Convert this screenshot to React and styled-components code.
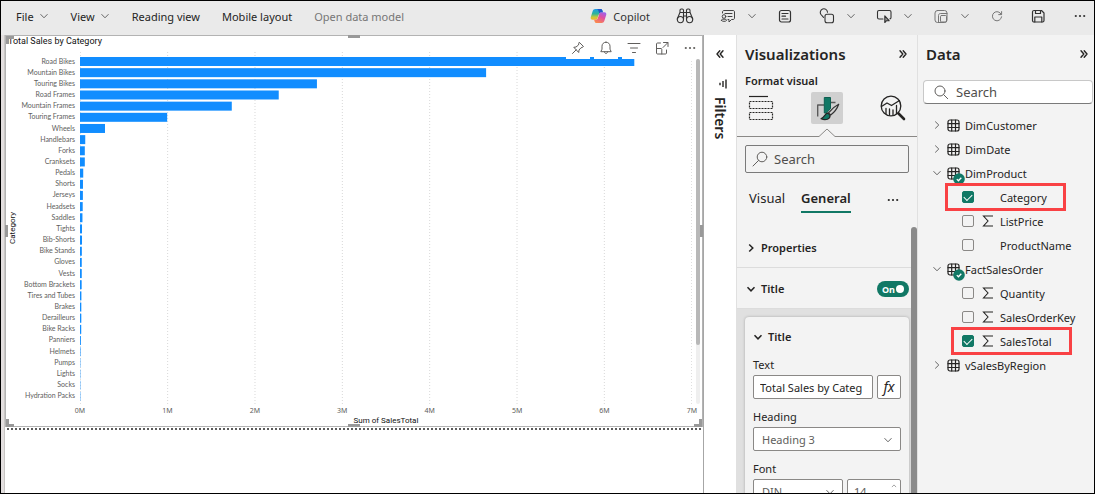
import React from "react";
import styled, { createGlobalStyle, css } from "styled-components";

const GlobalStyle = createGlobalStyle`
  * { box-sizing: border-box; }
  body {
    margin: 0;
    font-family: "Segoe UI", "Noto Sans", sans-serif;
    font-size: 11px;
    color: #252423;
  }
  button, input, select { font: inherit; color: inherit; }
  button { border: 0; padding: 0; background: none; cursor: pointer; }
  svg { display: block; flex: none; }
`;

/* ---------- shell ---------- */

const Frame = styled.div`
  display: flex;
  flex-direction: column;
  height: 100vh;
  border: 1px solid #000;
  overflow: hidden;
  background: #fff;
`;

const Toolbar = styled.header`
  display: flex;
  flex: none;
  align-items: center;
  height: 34px;
  padding: 0 6px 4px 15px;
  background: #eaeaea;
`;

const Menu = styled.nav`
  display: flex;
  align-items: center;
  gap: 22px;
  white-space: nowrap;
`;

const MenuButton = styled.button`
  display: flex;
  align-items: center;
  gap: 5px;
  color: ${(p) => (p.$muted ? "#767676" : "#252423")};
`;

const Tools = styled.div`
  display: flex;
  align-items: center;
  gap: 20px;
  margin-left: auto;
`;

const ToolButton = styled.button`
  display: flex;
  align-items: center;
  gap: 11px;
  margin-right: ${(p) => (p.$single ? "6px" : "0")};
  color: ${(p) => (p.$muted ? "#777" : "#333")};
`;

const CopilotButton = styled(ToolButton)`
  gap: 6px;
`;

const Workspace = styled.div`
  display: flex;
  flex: 1;
  min-height: 0;
`;

const Rail = styled.div`
  flex: none;
  width: 4px;
  background: #e3dfdf;
  border-right: 1px solid #c8c6c4;
`;

const Canvas = styled.main`
  flex: 1;
  min-width: 0;
  border-right: 1px solid #a6a6a6;
`;

/* ---------- chart visual ---------- */

const Visual = styled.section`
  position: relative;
  display: flex;
  flex-direction: column;
  height: 392px;
  border: 1px solid #b3b3b3;
  padding-right: 2px;
`;

const ChartTitle = styled.h2`
  flex: none;
  margin: 0;
  padding-left: 2px;
  height: 16px;
  font: 400 9px/11px Roboto, sans-serif;
  color: #111;
`;

const ChartBody = styled.div`
  display: grid;
  grid-template-columns: 14px 56px 1fr 4px;
  height: 352px;
`;

const AxisName = styled.span`
  font: 400 8px/11px Roboto, sans-serif;
  color: #111;
  text-align: center;
`;

const VerticalAxisName = styled(AxisName)`
  line-height: 14px;
  writing-mode: vertical-rl;
  transform: rotate(180deg);
`;

const CategoryLabels = styled.ul`
  display: flex;
  flex-direction: column;
  margin: 0;
  padding: 3px 1px 3px 0;
  list-style: none;
  font-family: Lato, sans-serif;
  font-size: 7px;
  line-height: 10px;
  white-space: nowrap;
  color: #605e5c;

  li {
    display: flex;
    flex: 1;
    align-items: center;
    justify-content: flex-end;
    min-height: 0;
  }
`;

const Plot = styled.div`
  margin: 0 4px;
  min-width: 0;
`;

const ScrollTrack = styled.div`
  margin-top: 7px;
  border-radius: 2px;
  background: #efefef;
`;

const ScrollThumb = styled.div`
  height: 83%;
  border-radius: 2px;
  background: #b8b8b8;
`;

const Ticks = styled.div`
  display: flex;
  flex: none;
  justify-content: space-between;
  height: 11px;
  padding: 0 8px 0 74px;
  font-size: 7px;
  line-height: 14px;
  color: #605e5c;

  span {
    display: flex;
    justify-content: center;
    width: 0;
  }
`;

const HorizontalAxisName = styled(AxisName)`
  padding-left: 66px;
`;

const VisualHeader = styled.div`
  position: absolute;
  top: 0;
  right: 0;
  display: flex;
  gap: 4px;
`;

const HeaderButton = styled.button`
  display: flex;
  align-items: center;
  justify-content: center;
  width: 24px;
  height: 23px;
  background: #fff;
  color: #605e5c;
`;

const handlePlaces = {
  topLeft: css`top: 0; left: 0; border-width: 3px 0 0 3px;`,
  bottomLeft: css`bottom: -1px; left: 0; border-width: 0 0 3px 3px;`,
  bottomRight: css`bottom: -1px; right: 0; border-width: 0 3px 3px 0;`,
  top: css`top: -1px; left: calc(50% - 6px); width: 12px; border-width: 3px 0 0;`,
  bottom: css`bottom: -1px; left: calc(50% - 6px); width: 12px; border-width: 0 0 3px;`,
  left: css`left: -1px; top: calc(50% - 6px); height: 12px; border-width: 0 0 0 3px;`,
  right: css`right: -1px; top: calc(50% - 6px); height: 12px; border-width: 0 3px 0 0;`,
};

const Handle = styled.span`
  position: absolute;
  width: 8px;
  height: 8px;
  border: 0 solid #999;
  ${(p) => handlePlaces[p.$place]}
`;

const PageEdge = styled.div`
  height: 2px;
  margin-top: 1px;
  background: repeating-linear-gradient(to right, #fff 0 2px, #5a5a5a 2px 4px);
`;

/* ---------- side panes ---------- */

const FiltersPane = styled.aside`
  display: flex;
  flex: none;
  flex-direction: column;
  align-items: center;
  width: 32px;
  padding-top: 14px;
`;

const FiltersTitle = styled.h2`
  margin: 8px 0 0;
  font-size: 14px;
  font-weight: 600;
  line-height: 20px;
  writing-mode: vertical-rl;
`;

const FilterGlyph = styled.div`
  margin: 20px 0 0 4px;
`;

const Pane = styled.aside`
  display: flex;
  flex: none;
  flex-direction: column;
  width: ${(p) => p.$width};
  background: #f3f3f3;
  border-left: 1px solid #e0e0e0;
`;

const PaneHeader = styled.div`
  display: flex;
  flex: none;
  align-items: center;
  justify-content: space-between;
  height: 38px;
  padding: 0 ${(p) => (p.$tight ? "6px" : "10px")} 0 8px;
`;

const PaneTitle = styled.h2`
  margin: 0;
  font-size: 15px;
  font-weight: 600;
  line-height: 20px;
`;

const IconButton = styled.button`
  display: flex;
  color: #252423;
`;

const Subtitle = styled.h3`
  margin: 0;
  padding: 0 8px;
  font-size: 11px;
  font-weight: 600;
  line-height: 16px;
`;

const ModeBar = styled.div`
  display: flex;
  flex: none;
  justify-content: space-between;
  padding: 3px 8px 0;
`;

const ModeButton = styled.button`
  display: flex;
  align-items: center;
  justify-content: center;
  width: 32px;
  height: 32px;
  border-radius: 2px;
  background: ${(p) => (p.$active ? "#d0d0d0" : "transparent")};
`;

const Pointer = styled.div`
  display: flex;
  align-items: flex-end;
  height: 13px;

  &::before,
  &::after {
    content: "";
    flex: 1;
    height: 1px;
    background: #8a8886;
  }
`;

const SearchBox = styled.label`
  display: flex;
  flex: none;
  align-items: center;
  gap: ${(p) => (p.$wide ? "7px" : "6px")};
  height: ${(p) => (p.$wide ? "24px" : "28px")};
  margin: ${(p) => (p.$wide ? "7px 1px 9px 5px" : "8px 8px 0")};
  padding: 0 ${(p) => (p.$wide ? "9px" : "6px")};
  border: 1px solid ${(p) => (p.$wide ? "#c8c8c8" : "#7a7a7a")};
  border-bottom-color: #7a7a7a;
  border-radius: ${(p) => (p.$wide ? "4px" : "2px")};
  background: ${(p) => (p.$wide ? "#fff" : "transparent")};
  color: #605e5c;
  font-size: 13px;

  input {
    flex: 1;
    min-width: 0;
    border: 0;
    padding: 0;
    outline: 0;
    background: none;
  }
  input::placeholder { color: #504e4c; opacity: 1; }
`;

const Tabs = styled.div`
  display: flex;
  flex: none;
  align-items: center;
  gap: 16px;
  margin-top: 14px;
  padding: 0 16px 0 12px;
`;

const Tab = styled.button`
  padding-bottom: 2px;
  font-size: 13px;
  line-height: 22px;
  font-weight: ${(p) => (p.$active ? 600 : 400)};
  border-bottom: 2px solid ${(p) => (p.$active ? "#117865" : "transparent")};
`;

const MoreButton = styled(IconButton)`
  margin-left: auto;
`;

const ScrollArea = styled.div`
  display: flex;
  flex: 1;
  min-height: 0;
  margin-top: 14px;
`;

const FormatList = styled.div`
  flex: 1;
  min-width: 0;
  overflow: hidden;
`;

const PaneScrollbar = styled.div`
  flex: none;
  width: 6px;
  border-radius: 3px 3px 0 0;
  background: #8a8a8a;
`;

const SectionRow = styled.div`
  display: flex;
  align-items: center;
  justify-content: space-between;
  height: 41px;
  padding: 2px 2px 0 9px;
  border-bottom: 1px solid #dcdcdc;
`;

const SectionButton = styled.button`
  display: flex;
  align-items: center;
  gap: 5px;
  font-weight: 600;
  line-height: 20px;
`;

const Toggle = styled.label`
  display: flex;
  align-items: center;
  justify-content: space-between;
  width: 32px;
  height: 16px;
  padding: 0 5px;
  border-radius: 8px;
  background: #117865;
  color: #fff;
  font-size: 9px;
  font-weight: 700;

  input {
    appearance: none;
    width: 8px;
    height: 8px;
    margin: 0;
    border-radius: 50%;
    background: #fff;
  }
`;

const CardArea = styled.div`
  padding: 8px 2px 0 8px;
  background: #e0e0e0;
`;

const Card = styled.div`
  padding: 10px 8px;
  border-radius: 4px;
  background: #f3f3f3;
  box-shadow: 0 0 3px rgba(0, 0, 0, 0.25);
`;

const Field = styled.div`
  display: flex;
  flex-direction: column;
  margin-top: 8px;

  label { line-height: 20px; }
`;

const FieldRow = styled.div`
  display: flex;
  gap: 4px;
`;

const boxed = css`
  height: 24px;
  border: 1px solid #8a8886;
  border-radius: 2px;
  background: #fff;
`;

const TextInput = styled.input`
  ${boxed}
  flex: 1;
  min-width: 0;
  padding: 0 6px;
  outline: 0;
`;

const FxButton = styled.button`
  ${boxed}
  width: 24px;
  font-size: 14px;
  font-style: italic;
  line-height: 20px;
`;

const SelectWrap = styled.div`
  position: relative;
  flex: 1;

  select {
    ${boxed}
    width: 100%;
    padding: 0 8px;
    appearance: none;
    color: #605e5c;
  }
  svg {
    position: absolute;
    top: 8px;
    right: 8px;
    pointer-events: none;
  }
`;

const NumberWrap = styled.div`
  position: relative;
  width: 54px;

  input {
    ${boxed}
    width: 100%;
    padding: 0 6px;
    color: #605e5c;
  }
  svg {
    position: absolute;
    top: 4px;
    right: 4px;
  }
`;

/* ---------- data tree ---------- */

const Tree = styled.ul`
  margin: 0;
  padding: 0;
  list-style: none;
`;

const TreeRow = styled.div`
  position: relative;
  display: flex;
  align-items: center;
  height: 24px;
  padding-left: ${(p) => (p.$child ? "44px" : "14px")};
  white-space: nowrap;
`;

const TableButton = styled.button`
  display: flex;
  align-items: center;
  gap: 5px;
`;

const TableGlyph = styled.span`
  position: relative;
  display: flex;
`;

const CheckBadge = styled.span`
  position: absolute;
  top: 6px;
  left: 6px;
`;

const FieldLabel = styled.label`
  display: flex;
  align-items: center;

  input {
    appearance: none;
    display: grid;
    width: 12px;
    height: 12px;
    margin: 0 8px 0 0;
    border: 1px solid #8a8886;
    border-radius: 2px;
  }
  input:checked {
    border-color: #117865;
    background: #117865;
  }
  input:checked::after {
    content: "";
    width: 7px;
    height: 4px;
    margin: 2px 0 0 1px;
    border: solid #fff;
    border-width: 0 0 1px 1px;
    transform: rotate(-45deg);
  }
`;

const SigmaSlot = styled.span`
  width: 18px;
`;

const Callout = styled.span`
  position: absolute;
  top: -2px;
  left: ${(p) => p.$left};
  width: 121px;
  height: 28px;
  border: 3px solid #f94144;
  pointer-events: none;
`;

/* ---------- icons ---------- */

const Svg = ({ w = 16, h = 16, sw = 1, children, ...rest }) => (
  <svg
    width={w}
    height={h}
    viewBox={`0 0 ${w} ${h}`}
    fill="none"
    stroke="currentColor"
    strokeWidth={sw}
    strokeLinecap="round"
    strokeLinejoin="round"
    aria-hidden="true"
    {...rest}
  >
    {children}
  </svg>
);

const turns = { down: 0, right: -90, up: 180 };
const Chevron = ({ dir = "down", bold, size = 10 }) => (
  <svg
    width={size}
    height={size}
    viewBox="0 0 10 10"
    fill="none"
    stroke={bold ? "#252423" : "#666"}
    strokeWidth={bold ? 1.5 : 1}
    aria-hidden="true"
  >
    <path d="M1.5 3.2 5 6.8l3.5-3.6" transform={`rotate(${turns[dir]} 5 5)`} />
  </svg>
);

const DoubleChevron = ({ left }) => (
  <Svg w={8} h={10} sw={1.4}>
    {left ? <path d="M3.8 1.7 1 5l2.8 3.3M7 1.7 4.2 5 7 8.3" /> : <path d="M1 1.7 3.8 5 1 8.3M4.2 1.7 7 5 4.2 8.3" />}
  </Svg>
);

const Dots = ({ color = "currentColor" }) => (
  <svg width="16" height="16" viewBox="0 0 16 16" fill={color} aria-hidden="true">
    <circle cx="3.8" cy="8" r="1.1" />
    <circle cx="8" cy="8" r="1.1" />
    <circle cx="12.2" cy="8" r="1.1" />
  </svg>
);

const CopilotIcon = () => (
  <svg width="17" height="16" viewBox="0 0 17 16" aria-hidden="true">
    <defs>
      <linearGradient id="cpA" x1="0.3" y1="0" x2="0.3" y2="1">
        <stop offset="0" stopColor="#1a9be6" />
        <stop offset="0.45" stopColor="#2fb59a" />
        <stop offset="0.75" stopColor="#c9c93a" />
        <stop offset="1" stopColor="#f2b52d" />
      </linearGradient>
      <linearGradient id="cpB" x1="0.8" y1="0" x2="0.3" y2="1">
        <stop offset="0" stopColor="#9a62f0" />
        <stop offset="0.45" stopColor="#e04fa0" />
        <stop offset="1" stopColor="#fb8a4c" />
      </linearGradient>
    </defs>
    <path d="M5.4 1h5.2c1 0 1.5.7 1.8 1.5l.5 1.7h-1.6c-1.2 0-1.8.7-2.1 1.8L7.9 10c-.4 1.2-1 1.8-2.2 1.8H2.8C.9 11.8.4 10.5.8 9L2.7 3C3.1 1.7 4 1 5.4 1Z" fill="url(#cpA)" />
    <path d="M11.6 15H6.4c-1 0-1.500-.7-1.800-1.500l-.5-1.700h1.600c1.200 0 1.800-.7 2.100-1.800L9.100 6c.4-1.200 1-1.800 2.200-1.800h2.900c1.900 0 2.400 1.300 2 2.800L14.300 13c-.4 1.300-1.300 2-2.700 2Z" fill="url(#cpB)" />
    <path d="M6.4 1h4.200c1 0 1.500.7 1.800 1.500l.5 1.700h-1.600c-1 0-1.600.5-2 1.300L8.500 3C8.100 1.700 7.600 1 6.400 1Z" fill="#2256c9" />
    <path d="m8.600 6.800-1 3.200c-.3 1-.8 1.600-1.600 1.800.9-.1 1.300-.6 1.700-1.500L9 6.200Z" fill="#fff" />
  </svg>
);

const Binoculars = () => (
  <Svg w={18} sw={1.1}>
    <path d="M4 4.500V2.300c0-.8.5-1.300 1.300-1.300h.9c.8 0 1.300.5 1.300 1.300v9M14 4.500V2.300c0-.8-.5-1.300-1.300-1.300h-.9c-.8 0-1.300.5-1.300 1.300v9M4 4.200 1.300 11M14 4.200 16.700 11M7.500 4.500h3M7.500 8h3M4 4.500h3.500M10.500 4.500H14" />
    <circle cx="4.400" cy="11.600" r="3.100" />
    <circle cx="13.600" cy="11.600" r="3.100" />
  </Svg>
);

const CommentIcon = () => (
  <Svg stroke="#444">
    <path d="M2.500 5V4c0-.8.5-1.500 1.500-1.500h9c1 0 1.500.6 1.500 1.500v6c0 .9-.5 1.500-1.500 1.500h-1.500L9 14v-2.500H8" />
    <path d="M5 5.500h7M8 8.500h4" />
    <circle cx="4" cy="8.500" r="1.800" />
    <path d="M1.500 12.500c0-.8.5-1.300 1.300-1.300h2.400c.8 0 1.300.5 1.300 1.300-.8 1.200-4.200 1.200-5 0Z" />
  </Svg>
);

const PageIcon = () => (
  <Svg sw={1.2}>
    <rect x="2.500" y="2.500" width="11" height="11.500" rx="2" />
    <path d="M5 5.500h6M5 8.200h3.500M5 11h6" />
  </Svg>
);

const ShapesIcon = () => (
  <Svg sw={1.1}>
    <path d="M4.500 9.300 2 6.500a3.600 3.600 0 1 1 6.500-2.300" />
    <rect x="6" y="6.300" width="8.500" height="8.500" rx="2" />
  </Svg>
);

const PointerButtonIcon = () => (
  <Svg sw={1.1}>
    <path d="M7 11H3c-.9 0-1.500-.6-1.500-1.500V4c0-.9.6-1.500 1.500-1.500h10.500c.9 0 1.500.6 1.500 1.500v5.500c0 .7-.3 1.200-1 1.400" />
    <path d="M8.800 7.800v6.700l1.700-1.800h2.600Z" fill="#999" />
  </Svg>
);

const CopyIcon = () => (
  <Svg>
    <rect x="2" y="2.500" width="12" height="12" rx="2.500" />
    <path d="M5.500 14V7.500c0-1.200.8-2 2-2H14" />
    <rect x="7.500" y="7.500" width="6" height="6.500" rx="1" />
  </Svg>
);

const RefreshIcon = () => (
  <Svg w={14}>
    <path d="M11.300 6.500A4.600 4.600 0 1 0 11.600 8.800M11.600 3.600v3H8.700" />
  </Svg>
);

const SaveIcon = () => (
  <Svg sw={1.2}>
    <path d="M4 2.500h7.500l2.500 2.500v7.500c0 .8-.7 1.500-1.500 1.500H4c-.8 0-1.500-.7-1.500-1.500V4c0-.8.7-1.500 1.500-1.500Z" />
    <path d="M5.500 2.500V5.500h5V2.500M4.800 14V9h7v5" />
  </Svg>
);

const PinIcon = () => (
  <Svg w={14} h={14}>
    <path d="M8.500 1.500 12.500 5.500 11 6.500 10 6.800 8 9l-.3 2.500L2.800 6.300 5 6l2.500-2 .3-1.500ZM5.200 8.800 1.500 12.500" />
  </Svg>
);

const BellIcon = () => (
  <Svg w={14} h={14}>
    <path d="M7 1.200c-2.500 0-4 1.800-4 4v3L1.800 10.700h10.400L11 8.200v-3c0-2.200-1.500-4-4-4ZM5.400 10.900c.2 2.200 3 2.200 3.200 0" />
  </Svg>
);

const FunnelLines = () => (
  <Svg w={14} h={14}>
    <path d="M1 2.500h12M3.500 7h7M5.500 11.500h3" />
  </Svg>
);

const FocusIcon = () => (
  <Svg w={14} h={14}>
    <path d="M5.500 2H2.500c-.6 0-1 .4-1 1v9c0 .6.4 1 1 1h8c.6 0 1-.4 1-1V9M8.500 1.500H13v4M12.700 1.800 8 6.500M1.500 7.500h4.500c.5 0 .8.3.8.8V13" />
  </Svg>
);

const FilterSmall = () => (
  <Svg w={10} h={10} sw={1.4} strokeLinecap="butt">
    <path d="M9 .5v9M6 2v6M3 3.800v2.400" />
  </Svg>
);

const SearchGlyph = ({ flip }) => (
  <Svg w={16} h={16}>
    {flip ? (
      <>
        <circle cx="10" cy="6" r="4.800" />
        <path d="M6.500 9.500 1 15" />
      </>
    ) : (
      <>
        <circle cx="7" cy="7" r="5" />
        <path d="m10.700 10.700 4 4" />
      </>
    )}
  </Svg>
);

const BuildIcon = () => (
  <Svg w={26} h={26} strokeLinecap="butt" sw={1.2}>
    <path d="M1 1.500h19" />
    <g strokeDasharray="2 1">
      <rect x="1.500" y="6.500" width="23" height="7" />
      <rect x="1.500" y="17.500" width="23" height="7" />
    </g>
  </Svg>
);

const FormatIcon = () => (
  <Svg w={26} h={26} sw={1.4} strokeLinecap="butt">
    <path d="M10 10H3.700v11.500M16.500 7.500h5" stroke="#5a5a5a" />
    <path d="M10.300 2.500h6.200v11l-4 4.500h-2.200Z" fill="#117865" stroke="#0d5f50" strokeWidth="1" />
    <path d="M24.700 9.200c-4 2-7.700 5.300-10.200 8.600l2.200 2.200c3.500-2.700 6.500-6.500 8-10.800Z" fill="#d0d0d0" stroke="#333" strokeWidth="1.200" />
    <path d="M13.800 18.200c-2.800 0-2.800 3.600-6.800 5.600 4.500 1.700 9.500.6 9-3.400Z" fill="#117865" stroke="#252423" strokeWidth="1.200" />
  </Svg>
);

const AnalyticsIcon = () => (
  <Svg w={26} h={26} sw={1.3}>
    <circle cx="11" cy="11" r="9.800" />
    <path d="m18.500 18.500 5.500 5.500" strokeWidth="2.600" />
    <path d="M1.500 11.500 7 8l4.500 2.500L19.500 5.500" />
    <path d="M6 18.500v-5M9.500 20v-6M13 20v-5M16.500 18.500v-8" />
  </Svg>
);

const TableIcon = () => (
  <Svg w={13} h={13} sw={1.2}>
    <rect x="1" y="1" width="11" height="11" rx="2" />
    <path d="M4.700 1v11M8.500 1v11M1 4.700h11M1 8.500h11" />
  </Svg>
);

const BadgeIcon = () => (
  <svg width="12" height="12" viewBox="0 0 12 12" fill="none" aria-hidden="true">
    <circle cx="6" cy="6" r="5.800" fill="#117865" />
    <path d="m3.800 6.100 1.600 1.600 2.900-3" stroke="#fff" strokeWidth="1.300" />
  </svg>
);

const SigmaIcon = () => (
  <Svg w={12} h={12} sw={1.1} strokeLinecap="butt" strokeLinejoin="miter">
    <path d="M11 1H1.500l4.500 5-4.500 5H11" />
  </Svg>
);

/* ---------- data ---------- */

const sales = [
  ["Road Bikes", 6.34],
  ["Mountain Bikes", 4.645],
  ["Touring Bikes", 2.71],
  ["Road Frames", 2.273],
  ["Mountain Frames", 1.736],
  ["Touring Frames", 0.997],
  ["Wheels", 0.286],
  ["Handlebars", 0.06],
  ["Forks", 0.055],
  ["Cranksets", 0.055],
  ["Pedals", 0.037],
  ["Shorts", 0.034],
  ["Jerseys", 0.033],
  ["Headsets", 0.031],
  ["Saddles", 0.028],
  ["Tights", 0.023],
  ["Bib-Shorts", 0.023],
  ["Bike Stands", 0.021],
  ["Gloves", 0.02],
  ["Vests", 0.02],
  ["Bottom Brackets", 0.019],
  ["Tires and Tubes", 0.016],
  ["Brakes", 0.015],
  ["Derailleurs", 0.015],
  ["Bike Racks", 0.014],
  ["Panniers", 0.01],
  ["Helmets", 0.006],
  ["Pumps", 0.004],
  ["Lights", 0.004],
  ["Socks", 0.004],
  ["Hydration Packs", 0.004],
];

const MAX = 7;
const millions = Array.from({ length: MAX + 1 }, (_, i) => i);
const ROW = 346 / sales.length;

const tables = [
  { name: "DimCustomer" },
  { name: "DimDate" },
  {
    name: "DimProduct",
    fields: [
      { name: "Category", checked: true, callout: "27px" },
      { name: "ListPrice", sum: true },
      { name: "ProductName" },
    ],
  },
  {
    name: "FactSalesOrder",
    fields: [
      { name: "Quantity", sum: true },
      { name: "SalesOrderKey", sum: true },
      { name: "SalesTotal", sum: true, checked: true, callout: "33px" },
    ],
  },
  { name: "vSalesByRegion" },
];

/* ---------- parts ---------- */

function TopBar() {
  return (
    <Toolbar>
      <Menu>
        <MenuButton>File <Chevron /></MenuButton>
        <MenuButton>View <Chevron /></MenuButton>
        <MenuButton>Reading view</MenuButton>
        <MenuButton>Mobile layout</MenuButton>
        <MenuButton $muted>Open data model</MenuButton>
      </Menu>
      <Tools>
        <CopilotButton $single><CopilotIcon />Copilot</CopilotButton>
        <ToolButton $single aria-label="Find"><Binoculars /></ToolButton>
        <ToolButton aria-label="Comments"><CommentIcon /><Chevron /></ToolButton>
        <ToolButton $single aria-label="Text box"><PageIcon /></ToolButton>
        <ToolButton aria-label="Shapes"><ShapesIcon /><Chevron /></ToolButton>
        <ToolButton aria-label="Buttons"><PointerButtonIcon /><Chevron /></ToolButton>
        <ToolButton $muted aria-label="Visual interactions"><CopyIcon /><Chevron /></ToolButton>
        <ToolButton $single $muted aria-label="Refresh"><RefreshIcon /></ToolButton>
        <ToolButton $single aria-label="Save"><SaveIcon /></ToolButton>
        <ToolButton aria-label="More"><Dots /></ToolButton>
      </Tools>
    </Toolbar>
  );
}

function SalesChart() {
  return (
    <Visual>
      <ChartTitle>Total Sales by Category</ChartTitle>
      <ChartBody>
        <VerticalAxisName>Category</VerticalAxisName>
        <CategoryLabels>
          {sales.map(([name]) => <li key={name}>{name}</li>)}
        </CategoryLabels>
        <Plot>
          <svg width="100%" height="352" role="img" aria-label="Bar chart of sales by category">
            {millions.map((m) => (
              <line
                key={m}
                x1={`${(m / MAX) * 99.9 + 0.05}%`}
                x2={`${(m / MAX) * 99.9 + 0.05}%`}
                y1="0"
                y2="352"
                stroke="#d8d8d8"
                strokeDasharray="1 2"
              />
            ))}
            {sales.map(([name, value], i) => (
              <rect key={name} x="0" y={5 + i * ROW} width={`${(value / MAX) * 100}%`} height="9" fill="#118dff" />
            ))}
          </svg>
        </Plot>
        <ScrollTrack><ScrollThumb /></ScrollTrack>
      </ChartBody>
      <Ticks>{millions.map((m) => <span key={m}>{m}M</span>)}</Ticks>
      <HorizontalAxisName>Sum of SalesTotal</HorizontalAxisName>
      <VisualHeader>
        <HeaderButton aria-label="Pin"><PinIcon /></HeaderButton>
        <HeaderButton aria-label="Alerts"><BellIcon /></HeaderButton>
        <HeaderButton aria-label="Filters"><FunnelLines /></HeaderButton>
        <HeaderButton aria-label="Focus mode"><FocusIcon /></HeaderButton>
        <HeaderButton aria-label="More options"><Dots /></HeaderButton>
      </VisualHeader>
      {Object.keys(handlePlaces).map((place) => <Handle key={place} $place={place} />)}
    </Visual>
  );
}

function FormatCard() {
  return (
    <CardArea>
      <Card>
        <SectionButton><Chevron bold />Title</SectionButton>
        <Field>
          <label htmlFor="title-text">Text</label>
          <FieldRow>
            <TextInput id="title-text" defaultValue="Total Sales by Categ" />
            <FxButton aria-label="Conditional formatting">fx</FxButton>
          </FieldRow>
        </Field>
        <Field>
          <label htmlFor="heading">Heading</label>
          <SelectWrap>
            <select id="heading"><option>Heading 3</option></select>
            <Chevron />
          </SelectWrap>
        </Field>
        <Field>
          <label htmlFor="font">Font</label>
          <FieldRow>
            <SelectWrap>
              <select id="font"><option>DIN</option></select>
              <Chevron />
            </SelectWrap>
            <NumberWrap>
              <input type="text" inputMode="numeric" aria-label="Font size" defaultValue="14" />
              <Chevron dir="up" size={6} />
            </NumberWrap>
          </FieldRow>
        </Field>
      </Card>
    </CardArea>
  );
}

function VisualizationsPane() {
  return (
    <Pane $width="181px">
      <PaneHeader>
        <PaneTitle>Visualizations</PaneTitle>
        <IconButton aria-label="Collapse visualizations"><DoubleChevron /></IconButton>
      </PaneHeader>
      <Subtitle>Format visual</Subtitle>
      <ModeBar>
        <ModeButton aria-label="Build visual"><BuildIcon /></ModeButton>
        <ModeButton aria-label="Format visual" $active><FormatIcon /></ModeButton>
        <ModeButton aria-label="Analytics"><AnalyticsIcon /></ModeButton>
      </ModeBar>
      <Pointer>
        <svg width="16" height="9" viewBox="0 0 16 9" fill="none" stroke="#8a8886" aria-hidden="true">
          <path d="M0 8.500 8 1l8 7.500" />
        </svg>
      </Pointer>
      <SearchBox>
        <SearchGlyph flip />
        <input type="text" placeholder="Search" aria-label="Search format options" />
      </SearchBox>
      <Tabs>
        <Tab>Visual</Tab>
        <Tab $active>General</Tab>
        <MoreButton aria-label="More options"><Dots /></MoreButton>
      </Tabs>
      <ScrollArea>
        <FormatList>
          <SectionRow>
            <SectionButton><Chevron dir="right" bold />Properties</SectionButton>
          </SectionRow>
          <SectionRow>
            <SectionButton><Chevron bold />Title</SectionButton>
            <Toggle>On<input type="checkbox" defaultChecked /></Toggle>
          </SectionRow>
          <FormatCard />
        </FormatList>
        <PaneScrollbar />
      </ScrollArea>
    </Pane>
  );
}

function DataPane() {
  return (
    <Pane $width="177px">
      <PaneHeader $tight>
        <PaneTitle>Data</PaneTitle>
        <IconButton aria-label="Collapse data"><DoubleChevron /></IconButton>
      </PaneHeader>
      <SearchBox $wide>
        <SearchGlyph />
        <input type="text" placeholder="Search" aria-label="Search data" />
      </SearchBox>
      <Tree>
        {tables.map((table) => (
          <li key={table.name}>
            <TreeRow>
              <TableButton>
                <Chevron dir={table.fields ? "down" : "right"} />
                <TableGlyph>
                  <TableIcon />
                  {table.fields && <CheckBadge><BadgeIcon /></CheckBadge>}
                </TableGlyph>
                {table.name}
              </TableButton>
            </TreeRow>
            {table.fields && (
              <Tree>
                {table.fields.map((field) => (
                  <li key={field.name}>
                    <TreeRow $child>
                      <FieldLabel>
                        <input type="checkbox" defaultChecked={field.checked} />
                        <SigmaSlot>{field.sum && <SigmaIcon />}</SigmaSlot>
                        {field.name}
                      </FieldLabel>
                      {field.callout && <Callout $left={field.callout} />}
                    </TreeRow>
                  </li>
                ))}
              </Tree>
            )}
          </li>
        ))}
      </Tree>
    </Pane>
  );
}

export default function App() {
  return (
    <>
      <GlobalStyle />
      <Frame>
        <TopBar />
        <Workspace>
          <Rail />
          <Canvas>
            <SalesChart />
            <PageEdge />
          </Canvas>
          <FiltersPane>
            <IconButton aria-label="Expand filters"><DoubleChevron left /></IconButton>
            <FilterGlyph><FilterSmall /></FilterGlyph>
            <FiltersTitle>Filters</FiltersTitle>
          </FiltersPane>
          <VisualizationsPane />
          <DataPane />
        </Workspace>
      </Frame>
    </>
  );
}
